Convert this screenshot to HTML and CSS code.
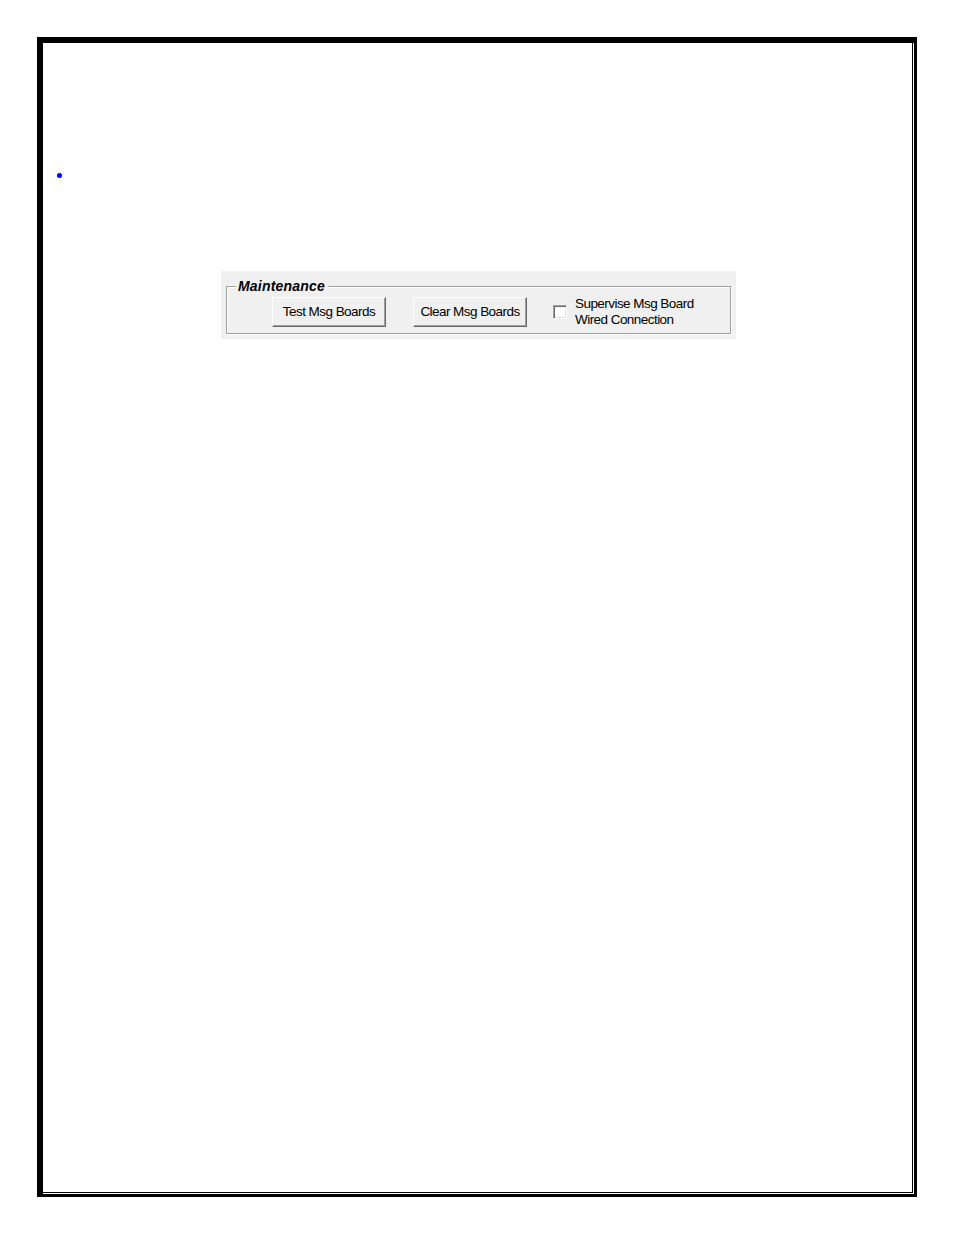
FILE: index.html
```html
<!DOCTYPE html>
<html>
<head>
<meta charset="utf-8">
<link rel="stylesheet" href="styles.css">
</head>
<body>
<div class="frame">
  <div class="frame-inner">
    <div class="bullet-row"><span class="bullet"></span></div>
    <div class="panel">
      <div class="group">
        <div class="legend">Maintenance</div>
        <div class="btn">Test Msg Boards</div>
        <div class="btn btn2">Clear Msg Boards</div>
        <div class="check">
          <span class="box"></span>
          <span class="check-label">Supervise Msg Board<br>Wired Connection</span>
        </div>
      </div>
    </div>
  </div>
</div>
</body>
</html>
```
FILE: styles.css
```css
html, body {
  margin: 0;
  padding: 0;
  background: #fff;
}
body {
  width: 954px;
  height: 1235px;
  font-family: "Liberation Sans", Arial, sans-serif;
  color: #000;
}
.frame {
  box-sizing: border-box;
  margin: 37px 0 0 37px;
  width: 880px;
  height: 1160px;
  border-style: solid;
  border-color: #000;
  border-width: 6px 3px 3px 6px;
}
.frame-inner {
  box-sizing: border-box;
  height: calc(100% - 1px);
  margin-right: 1px;
  border-right: 1px solid #000;
  border-bottom: 1px solid #000;
  padding-top: 130px;
}
.bullet-row {
  height: 5px;
  padding-left: 14px;
}
.bullet {
  display: block;
  width: 5px;
  height: 5px;
  border-radius: 50%;
  background: #0000ff;
}
.panel {
  box-sizing: border-box;
  margin: 93px 0 0 178px;
  width: 515px;
  height: 68px;
  padding: 15px 5px 5px 5px;
  background: #f0f0f0;
}
.group {
  position: relative;
  box-sizing: border-box;
  width: 505px;
  height: 48px;
  border: 1px solid #a0a0a0;
  box-shadow: inset 1px 1px 0 #fff, 1px 1px 0 #fff;
  display: flex;
  align-items: center;
  padding: 4px 0 0 45px;
}
.legend {
  position: absolute;
  left: 9px;
  top: -9px;
  padding: 0 3px 0 2px;
  background: #f0f0f0;
  font-weight: bold;
  font-style: italic;
  font-size: 14px;
  line-height: 16px;
  letter-spacing: 0.2px;
}
.btn {
  box-sizing: border-box;
  width: 114px;
  height: 30px;
  border: 1px solid;
  border-color: #fff #696969 #696969 #fff;
  box-shadow: inset -1px -1px 0 #a0a0a0;
  background: #f0f0f0;
  font-size: 13.5px;
  letter-spacing: -0.55px;
  display: flex;
  align-items: center;
  justify-content: center;
  padding-bottom: 1px;
}
.btn2 {
  margin-left: 27px;
}
.check {
  display: flex;
  align-items: center;
  margin-left: 26px;
}
.box {
  box-sizing: border-box;
  width: 14px;
  height: 14px;
  border: 1px solid;
  border-color: #a0a0a0 #fff #fff #a0a0a0;
  box-shadow: inset 1px 1px 0 #696969, inset -1px -1px 0 #e3e3e3;
  background: #fff;
}
.check-label {
  margin-left: 8px;
  font-size: 13.5px;
  line-height: 16px;
  letter-spacing: -0.55px;
}
```
